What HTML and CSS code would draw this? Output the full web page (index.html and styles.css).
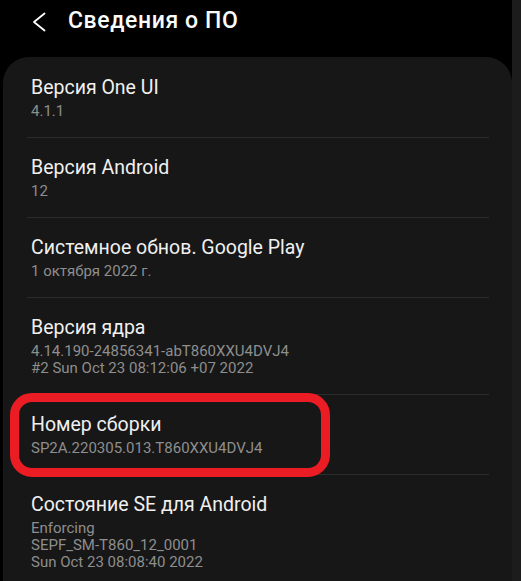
FILE: index.html
```html
<!DOCTYPE html>
<html lang="ru">
<head>
<meta charset="utf-8">
<title>Сведения о ПО</title>
<link rel="stylesheet" href="styles.css">
</head>
<body>
<div class="screen">
  <main class="main">
    <header class="header">
      <svg class="back" width="14" height="20" viewBox="0 0 14 20"><polyline points="12.5,1.5 2,10 12.5,18.5" fill="none" stroke="#ffffff" stroke-width="1.8" stroke-linecap="round" stroke-linejoin="round"/></svg>
      <h1 class="title">Сведения о ПО</h1>
    </header>
    <section class="card">
      <div class="item">
        <div class="item-title">Версия One UI</div>
        <div class="item-sub">4.1.1</div>
      </div>
      <div class="sep"></div>
      <div class="item">
        <div class="item-title">Версия Android</div>
        <div class="item-sub">12</div>
      </div>
      <div class="sep"></div>
      <div class="item">
        <div class="item-title">Системное обнов. Google Play</div>
        <div class="item-sub">1 октября 2022 г.</div>
      </div>
      <div class="sep"></div>
      <div class="item">
        <div class="item-title">Версия ядра</div>
        <div class="item-sub">4.14.190-24856341-abT860XXU4DVJ4<br>#2 Sun Oct 23 08:12:06 +07 2022</div>
      </div>
      <div class="sep"></div>
      <div class="item item-marked">
        <div class="item-title">Номер сборки</div>
        <div class="item-sub">SP2A.220305.013.T860XXU4DVJ4</div>
        <div class="highlight"></div>
      </div>
      <div class="sep"></div>
      <div class="item">
        <div class="item-title">Состояние SE для Android</div>
        <div class="item-sub">Enforcing<br>SEPF_SM-T860_12_0001<br>Sun Oct 23 08:08:40 2022</div>
      </div>
    </section>
  </main>
  <div class="scrollbar"></div>
</div>
</body>
</html>
```
FILE: styles.css
```css
html, body {
  margin: 0;
  padding: 0;
  background: #000;
  height: 100%;
  overflow: hidden;
}
body {
  font-family: Roboto, "Noto Sans", "Liberation Sans", sans-serif;
  color: #f2f2f2;
}
.screen {
  display: flex;
  height: 581px;
  overflow: hidden;
}
.main {
  width: 512px;
  flex: none;
  display: flex;
  flex-direction: column;
}
.scrollbar {
  flex: 1;
  background: #1c1c1c;
}
.header {
  flex: none;
  height: 57px;
  box-sizing: border-box;
  display: flex;
  align-items: flex-start;
  padding-top: 6px;
}
.back {
  margin-left: 32px;
  margin-top: 6px;
  flex: none;
}
.title {
  margin: 0 0 0 22px;
  font-size: 23px;
  line-height: 30px;
  font-weight: 500;
  color: #fafafa;
  letter-spacing: 0.6px;
}
.card {
  margin-left: 3px;
  flex: 1 0 auto;
  background: #171717;
  border-radius: 26px 26px 0 0;
  padding-top: 1px;
}
.item {
  position: relative;
  padding: 18px 20px 17px 28px;
}
.item-title {
  font-size: 19.5px;
  line-height: 24px;
  color: #f0f0f0;
}
.item-sub {
  margin-top: 3px;
  font-size: 15px;
  line-height: 17px;
  color: #8e8e8e;
}
.sep {
  height: 1px;
  background: #2c2c2c;
  margin: 0 23px 0 24px;
}
.highlight {
  position: absolute;
  left: 7px;
  top: -2px;
  width: 320px;
  height: 84px;
  box-sizing: border-box;
  border: 9px solid #ec1c24;
  border-radius: 22px;
}
```
